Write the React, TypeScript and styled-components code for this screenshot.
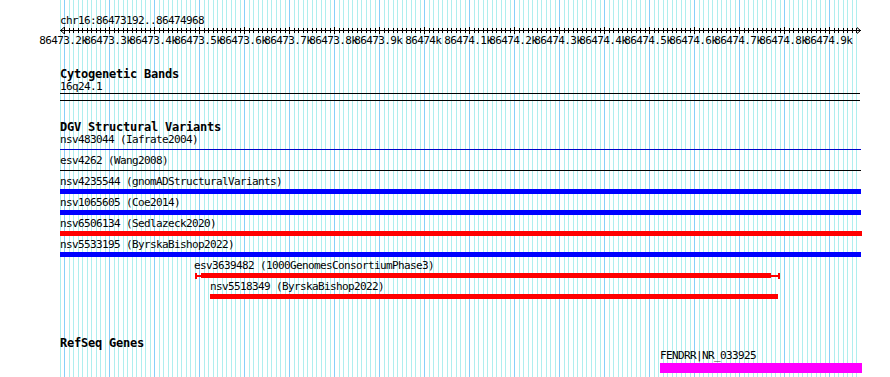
import React from 'react';
import styled, { createGlobalStyle } from 'styled-components';

const GlobalStyle = createGlobalStyle`
  html, body { margin: 0; padding: 0; background: #ffffff; }
  body { font-family: "DejaVu Sans Mono", "Liberation Mono", monospace; color: #000; }
`;

const START = 86473190;
const X0 = 60;
const PX_PER_BP = 0.45;
const bpToX = (bp: number) => X0 + (bp - START) * PX_PER_BP;
const GRID_COUNT = 178;

const Canvas = styled.div`
  position: relative;
  width: 890px;
  height: 377px;
  overflow: hidden;
  background: #ffffff;
`;

const GridLayer = styled.svg`
  position: absolute;
  left: 0;
  top: 0;
  z-index: 0;
  display: block;
`;

const Content = styled.div`
  position: relative;
  z-index: 1;
  display: flex;
  flex-direction: column;
`;

const ChrLabel = styled.div`
  margin-top: 15px;
  padding-left: 60px;
  font-size: 11px;
  letter-spacing: -0.62px;
  line-height: 12px;
  height: 12px;
  white-space: pre;
`;

const RulerSvg = styled.svg`
  display: block;
`;

const Track = styled.section<{ $gap: number }>`
  display: flex;
  flex-direction: column;
  margin-top: ${(p) => p.$gap}px;
`;

const TrackTitle = styled.h2`
  margin: 0;
  padding-left: 60px;
  font-family: "DejaVu Sans Mono", monospace;
  font-weight: bold;
  font-size: 12px;
  letter-spacing: -0.22px;
  line-height: 13px;
  height: 13px;
  white-space: pre;
`;

const FeatureLabel = styled.div`
  font-size: 11px;
  letter-spacing: -0.62px;
  line-height: 12px;
  height: 12px;
  white-space: pre;
`;

const Band = styled.div`
  margin-left: 60px;
  width: 800px;
  height: 6px;
  border-top: 1px solid #000;
  border-bottom: 1px solid #000;
`;

const FeatureRow = styled.div`
  display: flex;
  flex-direction: column;
  height: 21px;
`;

const BarSlot = styled.div<{ $h: number }>`
  margin-top: 1px;
  height: ${(p) => p.$h}px;
  display: flex;
  align-items: center;
`;

const Bar = styled.div<{ $color: string; $h: number }>`
  height: ${(p) => p.$h}px;
  background: ${(p) => p.$color};
  flex: none;
`;

const Cap = styled.div<{ $color: string }>`
  width: 2px;
  height: 6px;
  background: ${(p) => p.$color};
  flex: none;
`;

const Stem = styled.div<{ $color: string }>`
  height: 2px;
  background: ${(p) => p.$color};
  flex: none;
`;

type Feature = {
  label: string;
  start: number;
  end: number;
  color: string;
  h: number;
  slot?: number;
  whisker?: { from: number; to: number };
};

const dgv: Feature[] = [
  { label: 'nsv483044 (Iafrate2004)', start: 60, end: 861, color: '#0000cc', h: 1 },
  { label: 'esv4262 (Wang2008)', start: 60, end: 861, color: '#000000', h: 1 },
  { label: 'nsv4235544 (gnomADStructuralVariants)', start: 60, end: 861, color: '#0000ff', h: 5 },
  { label: 'nsv1065605 (Coe2014)', start: 60, end: 861, color: '#0000ff', h: 5 },
  { label: 'nsv6506134 (Sedlazeck2020)', start: 60, end: 862, color: '#ff0000', h: 5 },
  { label: 'nsv5533195 (ByrskaBishop2022)', start: 60, end: 861, color: '#0000ff', h: 5 },
  {
    label: 'esv3639482 (1000GenomesConsortiumPhase3)',
    start: 201,
    end: 771,
    color: '#ff0000',
    h: 5,
    whisker: { from: 195, to: 780 },
  },
  { label: 'nsv5518349 (ByrskaBishop2022)', start: 210, end: 778, color: '#ff0000', h: 5 },
];

const refseq: Feature[] = [
  { label: 'FENDRR|NR_033925', start: 660, end: 862, color: '#ff00ff', h: 10, slot: 10 },
];

const Grid: React.FC = () => {
  const lines = [];
  for (let i = 0; i < GRID_COUNT; i++) {
    const bp = START + i * 10;
    const x = Math.floor(bpToX(bp)) + 0.5;
    const major = bp % 100 === 0;
    lines.push(
      <line key={i} x1={x} x2={x} y1={0} y2={377} stroke={major ? '#87cefa' : '#afeeee'} strokeWidth={1} />
    );
  }
  return (
    <GridLayer width={890} height={377}>
      {lines}
    </GridLayer>
  );
};

const Ruler: React.FC = () => {
  const ticks = [];
  const labels = [];
  const y = 3.5;
  for (let i = 1; i < GRID_COUNT; i++) {
    const bp = START + i * 10;
    const x = Math.floor(bpToX(bp)) + 0.5;
    const major = bp % 100 === 0;
    ticks.push(
      <line key={i} x1={x} x2={x} y1={major ? 0 : 1} y2={major ? 7 : 6} stroke="#000" strokeWidth={1} />
    );
    if (major) {
      labels.push(
        <text
          key={'l' + i}
          x={x - 1.2}
          y={17}
          textAnchor="middle"
          fontFamily='"DejaVu Sans Mono", monospace'
          fontSize={11}
          letterSpacing={-0.62}
          fill="#000"
        >
          {`${bp / 1000}k`}
        </text>
      );
    }
  }
  return (
    <RulerSvg width={890} height={22}>
      <line x1={60} x2={861} y1={y} y2={y} stroke="#000" strokeWidth={1} />
      <polyline points="64,0.5 60.5,3.5 64,6.5" fill="none" stroke="#000" strokeWidth={1} />
      <polyline points="857,0.5 860.5,3.5 857,6.5" fill="none" stroke="#000" strokeWidth={1} />
      {ticks}
      {labels}
    </RulerSvg>
  );
};

const FeatureGlyph: React.FC<{ f: Feature }> = ({ f }) => {
  if (f.whisker) {
    const left = f.whisker.from;
    return (
      <BarSlot $h={f.slot ?? 5} style={{ marginLeft: left }}>
        <Cap $color={f.color} />
        <Stem $color={f.color} style={{ width: f.start - left - 2 }} />
        <Bar $color={f.color} $h={f.h} style={{ width: f.end - f.start }} />
        <Stem $color={f.color} style={{ width: f.whisker.to - f.end - 2 }} />
        <Cap $color={f.color} />
      </BarSlot>
    );
  }
  return (
    <BarSlot $h={f.slot ?? 5} style={{ marginLeft: f.start }}>
      <Bar $color={f.color} $h={f.h} style={{ width: f.end - f.start }} />
    </BarSlot>
  );
};

const FeatureItem: React.FC<{ f: Feature }> = ({ f }) => {
  const labelX = f.whisker ? f.whisker.from - 1 : f.start;
  return (
    <FeatureRow>
      <FeatureLabel style={{ paddingLeft: labelX }}>{f.label}</FeatureLabel>
      <FeatureGlyph f={f} />
    </FeatureRow>
  );
};

export default function App() {
  return (
    <>
      <GlobalStyle />
      <Canvas>
        <Grid />
        <Content>
          <ChrLabel>chr16:86473192..86474968</ChrLabel>
          <Ruler />
          <Track $gap={19}>
            <TrackTitle>Cytogenetic Bands</TrackTitle>
            <FeatureLabel style={{ paddingLeft: 60 }}>16q24.1</FeatureLabel>
            <Band />
          </Track>
          <Track $gap={20}>
            <TrackTitle>DGV Structural Variants</TrackTitle>
            {dgv.map((f) => (
              <FeatureItem key={f.label} f={f} />
            ))}
          </Track>
          <Track $gap={35}>
            <TrackTitle>RefSeq Genes</TrackTitle>
            {refseq.map((f) => (
              <FeatureItem key={f.label} f={f} />
            ))}
          </Track>
        </Content>
      </Canvas>
    </>
  );
}
